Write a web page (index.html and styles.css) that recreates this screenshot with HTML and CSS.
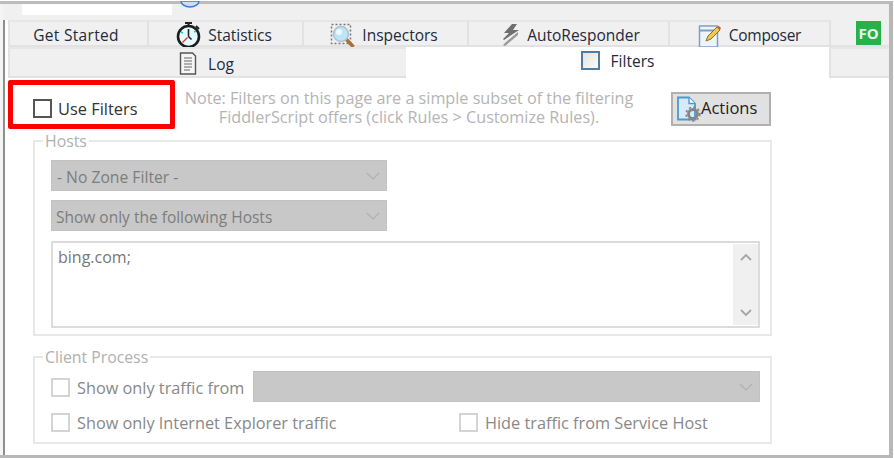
FILE: index.html
```html
<!DOCTYPE html>
<html lang="en">
<head>
    <meta charset="UTF-8">
    <meta name="viewport" content="width=device-width, initial-scale=1.0">
    <title>Fiddler Filters</title>
    <link rel="stylesheet" href="styles.css">
</head>
<body>
    <div class="window">
        <div class="topStrip">
            <div class="addressBox"></div>
            <svg class="globe" width="20" height="8" viewBox="0 0 20 8"><path d="M1 0a9 6 0 0 0 18 0z" fill="#cfdcf2" stroke="#4a7bc8" stroke-width="1.5"/></svg>
        </div>

        <div class="tabRow">
            <div class="tab tabGetStarted">Get Started</div>
            <div class="tab tabStatistics">
                <svg class="icon" width="25" height="26" viewBox="0 0 25 26">
                    <path d="M9 1h7M12.5 1v4M20 4l3 3" stroke="#222" stroke-width="2" fill="none"/>
                    <circle cx="12.5" cy="14.5" r="10.5" fill="#e4fbfd" stroke="#1c1c1c" stroke-width="2.6"/>
                    <path d="M12.5 14.5V7M12.5 14.5l3 3" stroke="#222" stroke-width="1.6" fill="none"/>
                    <path d="M11.5 15.5l-5 5" stroke="#e33" stroke-width="1.5" fill="none"/>
                    <path d="M5 10l2 1M20 9l-2 1" stroke="#2cc" stroke-width="1.4" fill="none"/>
                </svg>
                Statistics
            </div>
            <div class="tab tabInspectors">
                <svg class="icon" width="25" height="25" viewBox="0 0 25 25">
                    <rect x="1.5" y="1.5" width="19" height="19" fill="none" stroke="#777" stroke-width="1.5" stroke-dasharray="2 2"/>
                    <path d="M16 16l7.5 8" stroke="#a8703a" stroke-width="3.5"/>
                    <circle cx="11" cy="11" r="7.5" fill="#bfe4f7" stroke="#a9c3d2" stroke-width="1.5"/>
                    <circle cx="9" cy="9" r="3" fill="#eef9ff"/>
                </svg>
                Inspectors
            </div>
            <div class="tab tabAutoResponder">
                <svg class="icon" width="18" height="22" viewBox="0 0 18 22">
                    <path d="M10 0L2 9h5l-6 6 1 1 15-10h-6l4-6z" fill="#6f6f6f"/>
                    <path d="M16 8L4 18l-3 3 2 1 13-11z" fill="#9a9a9a"/>
                </svg>
                AutoResponder
            </div>
            <div class="tab tabComposer">
                <svg class="icon" width="24" height="23" viewBox="0 0 24 23">
                    <rect x="1.5" y="2" width="18" height="21" fill="#eef4fb" stroke="#7f9fc4" stroke-width="1.5"/>
                    <path d="M2 6.5h17" stroke="#7f9fc4" stroke-width="2"/>
                    <path d="M8 17l2-5L19 3l3 3-9 9z" fill="#f2c84b" stroke="#8a6d2b"/>
                    <path d="M19 3l3 3 1-2-2-2z" fill="#d9534f"/>
                </svg>
                Composer
            </div>
            <div class="tab tabFiddlerOrchestra"><span class="foBadge">FO</span></div>
        </div>

        <div class="tabRow tabRowLower">
            <div class="tab tabLog">
                <svg class="icon" width="18" height="23" viewBox="0 0 18 23">
                    <path d="M1.5 1h12l3 3v18h-15z" fill="#f6f6f6" stroke="#555" stroke-width="1.4"/>
                    <path d="M5 6h8M5 9h8M5 12h8M5 15h8M5 18h6" stroke="#666" stroke-width="1.2"/>
                </svg>
                Log
            </div>
            <div class="tab tabFilters">
                <span class="filtersBox"></span>
                Filters
            </div>
            <div class="tab tabFiller"></div>
        </div>

        <div class="panel">
            <div class="panelTop">
                <label class="useFilters"><span class="checkbox checkboxActive"></span>Use Filters</label>
                <p class="note">Note: Filters on this page are a simple subset of the filtering<br>FiddlerScript offers (click Rules &gt; Customize Rules).</p>
                <button class="actionsButton">
                    <svg width="25" height="26" viewBox="0 0 25 26">
                        <path d="M2 1.5h11l6 6v16H2z" fill="#d6eaf8" stroke="#4a9ad4" stroke-width="1.8"/>
                        <path d="M13 1.5v6h6" fill="#fff" stroke="#4a9ad4" stroke-width="1.4"/>
                        <circle cx="17" cy="18" r="4.5" fill="none" stroke="#858585" stroke-width="2.8"/>
                        <circle cx="17" cy="18" r="6.8" fill="none" stroke="#858585" stroke-width="1.8" stroke-dasharray="2.2 2.4"/>
                    </svg><span class="actionsLabel">Actions</span>
                </button>
            </div>

            <fieldset class="group groupHosts">
                <legend>Hosts</legend>
                <div class="combo comboShort comboZone">
                    <span>- No Zone Filter -</span>
                    <svg class="chevron" width="14" height="8" viewBox="0 0 14 8"><path d="M1 1l6 6 6-6" fill="none" stroke="#b0b0b0" stroke-width="1.2"/></svg>
                </div>
                <div class="combo comboShort">
                    <span>Show only the following Hosts</span>
                    <svg class="chevron" width="14" height="8" viewBox="0 0 14 8"><path d="M1 1l6 6 6-6" fill="none" stroke="#b0b0b0" stroke-width="1.2"/></svg>
                </div>
                <div class="hostList">
                    <span class="hostText">bing.com;</span>
                    <div class="scrollBar">
                        <svg width="12" height="8" viewBox="0 0 12 8"><path d="M1 7l5-5 5 5" fill="none" stroke="#a6a6a6" stroke-width="1.8"/></svg>
                        <svg width="12" height="8" viewBox="0 0 12 8"><path d="M1 1l5 5 5-5" fill="none" stroke="#a6a6a6" stroke-width="1.8"/></svg>
                    </div>
                </div>
            </fieldset>

            <fieldset class="group groupClient">
                <legend>Client Process</legend>
                <div class="clientRow">
                    <label class="option optionFrom"><span class="checkbox"></span>Show only traffic from</label>
                    <div class="combo comboWide">
                        <svg class="chevron" width="14" height="8" viewBox="0 0 14 8"><path d="M1 1l6 6 6-6" fill="none" stroke="#b0b0b0" stroke-width="1.2"/></svg>
                    </div>
                </div>
                <div class="clientRow clientRowLower">
                    <label class="option optionIe"><span class="checkbox"></span>Show only Internet Explorer traffic</label>
                    <label class="option"><span class="checkbox"></span>Hide traffic from Service Host</label>
                </div>
            </fieldset>
        </div>
    </div>
</body>
</html>
```

FILE: styles.css
```css
* {
    box-sizing: border-box;
}
html, body {
    margin: 0;
    padding: 0;
    background-color: white;
}
body {
    width: 894px;
    height: 458px;
    overflow: hidden;
    padding-top: 1px;
    font-family: "Open Sans", "Noto Sans", sans-serif;
    font-size: 16px;
    color: #333;
}
.window {
    height: 457px;
    margin-right: 1px;
    padding-left: 5px;
    border-top: 3px solid #bcbcbc;
    border-right: 4px solid #b8b8b8;
    border-bottom: 3px solid #b8b8b8;
    background: linear-gradient(to right, #f4f4f4 3px, #8f8f8f 3px, #8f8f8f 5px, white 5px);
}
.topStrip {
    position: relative;
    height: 16px;
    margin-left: -2px;
    background-color: #f0f0f0;
}
.addressBox {
    width: 150px;
    height: 11px;
    margin-left: 19px;
    background-color: white;
}
.globe {
    position: absolute;
    left: 177px;
    top: -3px;
}

/* tabs */
.tabRow {
    display: flex;
    height: 27px;
    margin-left: 3px;
}
.tabRowLower {
    height: 31px;
}
.tab {
    display: flex;
    align-items: center;
    justify-content: center;
    padding-top: 3px;
    background-color: #f0f0f0;
    border-top: 2px solid #e6e6e6;
    border-left: 2px solid #e2e2e2;
    border-bottom: 2px solid #e2e2e2;
    color: #1f2a3c;
    font-size: 15.5px;
    white-space: nowrap;
}
.icon {
    margin-right: 7px;
    flex-shrink: 0;
}
.tabGetStarted {
    width: 139px;
    padding-right: 5px;
    letter-spacing: 0.3px;
}
.tabStatistics {
    width: 155px;
    padding-right: 3px;
}
.tabInspectors {
    width: 165px;
    padding-right: 3px;
}
.tabAutoResponder {
    width: 201px;
    padding-left: 5px;
}
.tabComposer {
    width: 161px;
    letter-spacing: -0.3px;
}
.tabFiddlerOrchestra {
    flex: 1;
    justify-content: flex-start;
    padding: 0 0 0 25px;
    border-top: none;
    overflow: hidden;
}
.foBadge {
    display: block;
    width: 25px;
    height: 24px;
    line-height: 24px;
    text-align: center;
    background-color: #27b14a;
    color: #e6f7ea;
    font-size: 15px;
    font-weight: 700;
}
.tabLog {
    width: 398px;
    padding-top: 2px;
    padding-right: 3px;
}
.tabLog .icon {
    margin-right: 11px;
}
.tabFilters {
    width: 423px;
    background-color: white;
    border: none;
    padding: 0 0 4px 0;
}
.filtersBox {
    width: 19px;
    height: 19px;
    margin-right: 11px;
    border: 2px solid #4f7da6;
    background: linear-gradient(135deg, #e4e4de, #fafaf8);
}
.tabFiller { flex: 1; }

/* filters panel */
.panel {
    padding: 0 0 0 3px;
}
.panelTop {
    display: flex;
    align-items: flex-start;
    height: 63px;
}
.useFilters {
    display: flex;
    align-items: center;
    gap: 6px;
    width: 167px;
    height: 49px;
    margin-top: 2px;
    padding: 7px 0 0 20px;
    border: 5px solid #fe0000;
    border-radius: 2px;
    font-size: 16.4px;
    color: #333;
}
.checkbox {
    flex-shrink: 0;
    display: block;
    width: 19px;
    height: 19px;
    border: 2px solid #d4d4d4;
    background-color: white;
}
.checkboxActive {
    border-color: #555;
}
.note {
    width: 458px;
    margin: 11px 0 0 5px;
    color: #b4b4b4;
    font-size: 16.2px;
    line-height: 19px;
    text-align: center;
    white-space: nowrap;
}
.actionsButton {
    display: flex;
    align-items: center;
    justify-content: flex-start;
    width: 100px;
    height: 34px;
    margin: 14px 0 0 33px;
    padding: 0 0 0 3px;
    border: 2px solid #b0b0b0;
    background-color: #e1e1e1;
    color: #222;
    font-family: inherit;
    font-size: 16.5px;
}
.actionsLabel {
    padding-bottom: 4px;
}

.group {
    width: 739px;
    margin: 0 0 0 25px;
    padding: 0 10px 0 16px;
    border: 2px solid #e8e8e8;
    min-width: 0;
}
.group legend {
    margin-left: -8px;
    padding: 0 2px;
    color: #b0b0b0;
    font-size: 15.8px;
    line-height: 20px;
}
.groupHosts {
    height: 205px;
    margin-top: -10px;
}
.groupClient {
    height: 97px;
    margin-top: 11px;
}
.combo {
    display: flex;
    align-items: center;
    justify-content: space-between;
    height: 31px;
    padding: 1px 6px 0 4px;
    background-color: #c8c8c8;
    border: 1px solid #c2c2c2;
    color: #7d7d7d;
    font-size: 15.5px;
}
.comboZone {
    font-size: 15.7px;
    padding-left: 5px;
}
.combo > span {
    padding-top: 1px;
}
.comboShort {
    width: 336px;
    margin-top: 9px;
}
.comboWide {
    width: 507px;
    justify-content: flex-end;
}
.hostList {
    position: relative;
    width: 709px;
    height: 87px;
    margin-top: 10px;
    padding: 3px 5px;
    border: 2px solid #dcdcdc;
    color: #777;
    font-size: 16px;
}
.scrollBar {
    position: absolute;
    top: 1px;
    right: 0;
    bottom: 1px;
    width: 25px;
    padding: 9px 0 8px;
    display: flex;
    flex-direction: column;
    justify-content: space-between;
    align-items: center;
    background-color: #f0f0f0;
}
.clientRow {
    display: flex;
    align-items: center;
    height: 31px;
    margin-top: 4px;
}
.clientRowLower {
    margin-top: 8px;
    height: 24px;
}
.option {
    display: flex;
    align-items: center;
    gap: 7px;
    padding-top: 1px;
    color: #888;
    font-size: 16.3px;
    white-space: nowrap;
}
.optionFrom {
    width: 202px;
    padding-top: 2px;
}
.optionIe { width: 408px; }
```
